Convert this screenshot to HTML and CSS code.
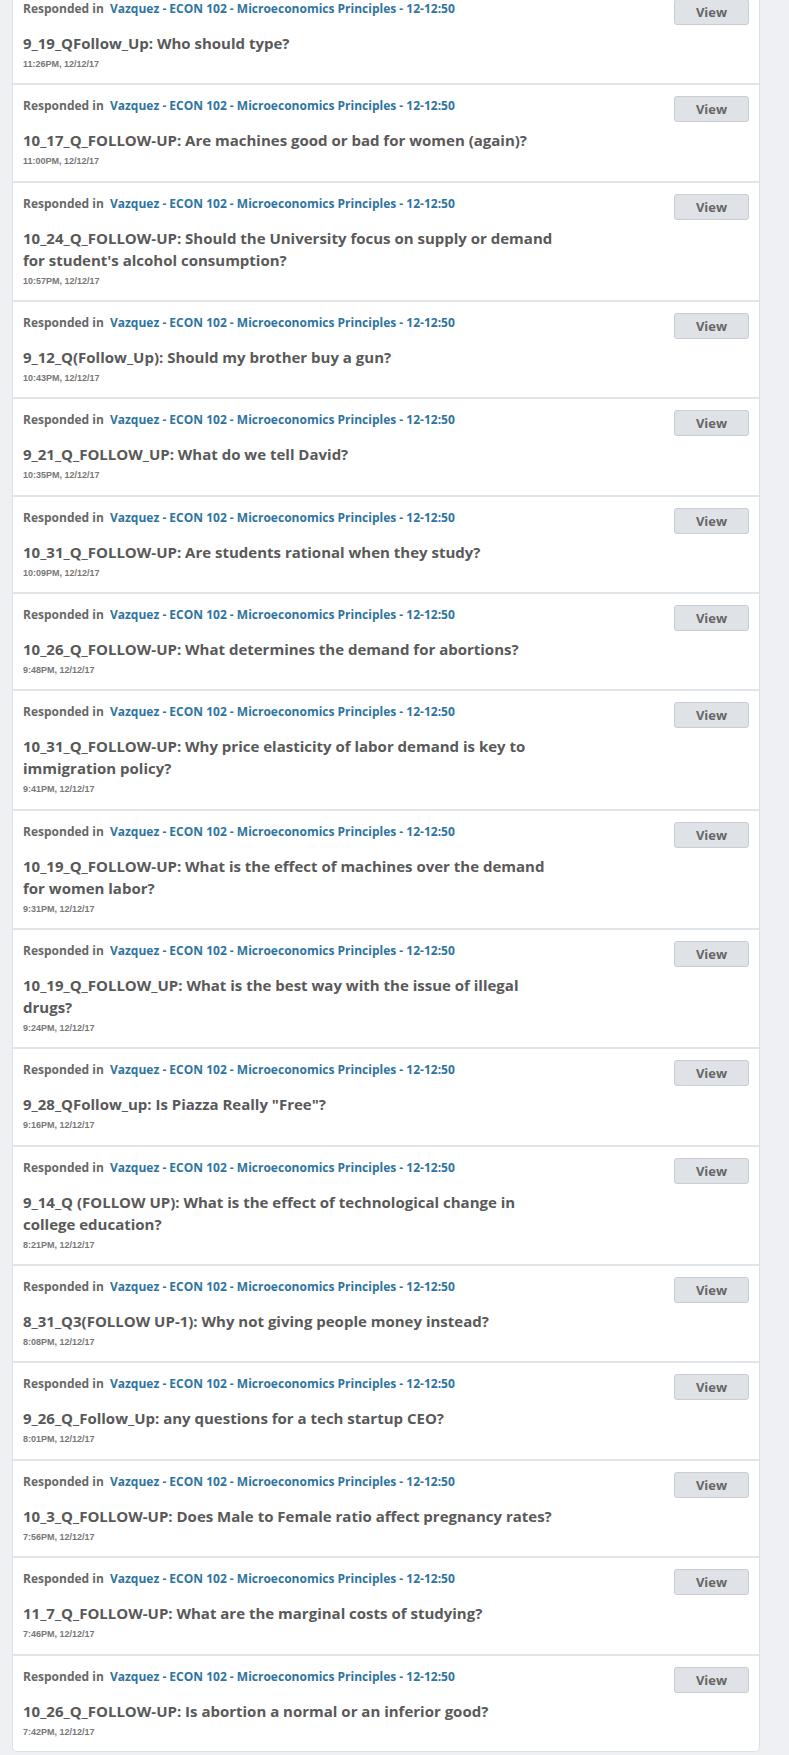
FILE: index.html
```html
<!DOCTYPE html>
<html>
<head>
<meta charset="utf-8">
<link rel="stylesheet" href="styles.css">
</head>
<body>
<div class="card">
  <div class="item">
    <div class="head"><div class="meta">Responded in <a class="course">Vazquez - ECON 102 - Microeconomics Principles - 12-12:50</a></div><button class="view">View</button></div>
    <div class="title">9_19_QFollow_Up: Who should type?</div>
    <div class="date">11:26PM, 12/12/17</div>
  </div>
  <div class="item">
    <div class="head"><div class="meta">Responded in <a class="course">Vazquez - ECON 102 - Microeconomics Principles - 12-12:50</a></div><button class="view">View</button></div>
    <div class="title">10_17_Q_FOLLOW-UP: Are machines good or bad for women (again)?</div>
    <div class="date">11:00PM, 12/12/17</div>
  </div>
  <div class="item">
    <div class="head"><div class="meta">Responded in <a class="course">Vazquez - ECON 102 - Microeconomics Principles - 12-12:50</a></div><button class="view">View</button></div>
    <div class="title">10_24_Q_FOLLOW-UP: Should the University focus on supply or demand for student's alcohol consumption?</div>
    <div class="date">10:57PM, 12/12/17</div>
  </div>
  <div class="item">
    <div class="head"><div class="meta">Responded in <a class="course">Vazquez - ECON 102 - Microeconomics Principles - 12-12:50</a></div><button class="view">View</button></div>
    <div class="title">9_12_Q(Follow_Up): Should my brother buy a gun?</div>
    <div class="date">10:43PM, 12/12/17</div>
  </div>
  <div class="item">
    <div class="head"><div class="meta">Responded in <a class="course">Vazquez - ECON 102 - Microeconomics Principles - 12-12:50</a></div><button class="view">View</button></div>
    <div class="title">9_21_Q_FOLLOW_UP: What do we tell David?</div>
    <div class="date">10:35PM, 12/12/17</div>
  </div>
  <div class="item">
    <div class="head"><div class="meta">Responded in <a class="course">Vazquez - ECON 102 - Microeconomics Principles - 12-12:50</a></div><button class="view">View</button></div>
    <div class="title">10_31_Q_FOLLOW-UP: Are students rational when they study?</div>
    <div class="date">10:09PM, 12/12/17</div>
  </div>
  <div class="item">
    <div class="head"><div class="meta">Responded in <a class="course">Vazquez - ECON 102 - Microeconomics Principles - 12-12:50</a></div><button class="view">View</button></div>
    <div class="title">10_26_Q_FOLLOW-UP: What determines the demand for abortions?</div>
    <div class="date">9:48PM, 12/12/17</div>
  </div>
  <div class="item">
    <div class="head"><div class="meta">Responded in <a class="course">Vazquez - ECON 102 - Microeconomics Principles - 12-12:50</a></div><button class="view">View</button></div>
    <div class="title">10_31_Q_FOLLOW-UP: Why price elasticity of labor demand is key to immigration policy?</div>
    <div class="date">9:41PM, 12/12/17</div>
  </div>
  <div class="item">
    <div class="head"><div class="meta">Responded in <a class="course">Vazquez - ECON 102 - Microeconomics Principles - 12-12:50</a></div><button class="view">View</button></div>
    <div class="title">10_19_Q_FOLLOW-UP: What is the effect of machines over the demand for women labor?</div>
    <div class="date">9:31PM, 12/12/17</div>
  </div>
  <div class="item">
    <div class="head"><div class="meta">Responded in <a class="course">Vazquez - ECON 102 - Microeconomics Principles - 12-12:50</a></div><button class="view">View</button></div>
    <div class="title">10_19_Q_FOLLOW_UP: What is the best way with the issue of illegal drugs?</div>
    <div class="date">9:24PM, 12/12/17</div>
  </div>
  <div class="item">
    <div class="head"><div class="meta">Responded in <a class="course">Vazquez - ECON 102 - Microeconomics Principles - 12-12:50</a></div><button class="view">View</button></div>
    <div class="title">9_28_QFollow_up: Is Piazza Really "Free"?</div>
    <div class="date">9:16PM, 12/12/17</div>
  </div>
  <div class="item">
    <div class="head"><div class="meta">Responded in <a class="course">Vazquez - ECON 102 - Microeconomics Principles - 12-12:50</a></div><button class="view">View</button></div>
    <div class="title">9_14_Q (FOLLOW UP): What is the effect of technological change in college education?</div>
    <div class="date">8:21PM, 12/12/17</div>
  </div>
  <div class="item">
    <div class="head"><div class="meta">Responded in <a class="course">Vazquez - ECON 102 - Microeconomics Principles - 12-12:50</a></div><button class="view">View</button></div>
    <div class="title">8_31_Q3(FOLLOW UP-1): Why not giving people money instead?</div>
    <div class="date">8:08PM, 12/12/17</div>
  </div>
  <div class="item">
    <div class="head"><div class="meta">Responded in <a class="course">Vazquez - ECON 102 - Microeconomics Principles - 12-12:50</a></div><button class="view">View</button></div>
    <div class="title">9_26_Q_Follow_Up: any questions for a tech startup CEO?</div>
    <div class="date">8:01PM, 12/12/17</div>
  </div>
  <div class="item">
    <div class="head"><div class="meta">Responded in <a class="course">Vazquez - ECON 102 - Microeconomics Principles - 12-12:50</a></div><button class="view">View</button></div>
    <div class="title">10_3_Q_FOLLOW-UP: Does Male to Female ratio affect pregnancy rates?</div>
    <div class="date">7:56PM, 12/12/17</div>
  </div>
  <div class="item">
    <div class="head"><div class="meta">Responded in <a class="course">Vazquez - ECON 102 - Microeconomics Principles - 12-12:50</a></div><button class="view">View</button></div>
    <div class="title">11_7_Q_FOLLOW-UP: What are the marginal costs of studying?</div>
    <div class="date">7:46PM, 12/12/17</div>
  </div>
  <div class="item">
    <div class="head"><div class="meta">Responded in <a class="course">Vazquez - ECON 102 - Microeconomics Principles - 12-12:50</a></div><button class="view">View</button></div>
    <div class="title">10_26_Q_FOLLOW-UP: Is abortion a normal or an inferior good?</div>
    <div class="date">7:42PM, 12/12/17</div>
  </div>
</div>
</body>
</html>
```
FILE: styles.css
```css
html, body {
  margin: 0;
  padding: 0;
  background: #eff0f4;
}
body {
  font-family: "Open Sans", "Liberation Sans", sans-serif;
  overflow: hidden;
}
.card {
  margin: -13px 0 0 12px;
  width: 746px;
  background: #fff;
  border: 1px solid #dde1e5;
  border-radius: 5px;
}
.item {
  padding: 11px 10px 12.35px 10px;
  border-top: 2px solid #e1e4e8;
}
.item:first-child {
  border-top: 0;
}
.head {
  display: flex;
  justify-content: space-between;
  align-items: flex-start;
}
.meta {
  font-size: 12px;
  line-height: 16px;
  font-weight: 700;
  color: #686868;
  padding-top: 2px;
}
.course {
  color: #2f74a0;
  margin-left: 3px;
}
.view {
  width: 75px;
  height: 26px;
  margin: 0;
  padding: 0;
  background: #dfe3e7;
  border: 1px solid #c7cdd2;
  border-radius: 3px;
  font-family: "Open Sans", "Liberation Sans", sans-serif;
  font-size: 13px;
  font-weight: 700;
  color: #666;
}
.title {
  max-width: 540px;
  margin-top: 7px;
  font-size: 15px;
  line-height: 22px;
  font-weight: 700;
  color: #595959;
}
.date {
  margin-top: 4px;
  font-family: "Liberation Sans", Arial, sans-serif;
  font-size: 9px;
  line-height: 13px;
  font-weight: 700;
  color: #777;
}
```
